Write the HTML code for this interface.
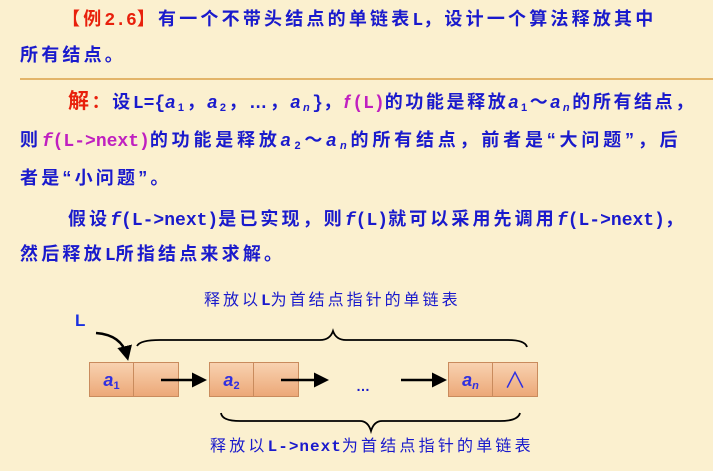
<!DOCTYPE html>
<html><head><meta charset="utf-8"><style>
body{margin:0;width:713px;height:471px;overflow:hidden;background:#fbf0cf;position:relative;font-family:"Liberation Sans","Noto Sans CJK SC",sans-serif;}
.t{position:absolute;left:0;white-space:nowrap;color:#1a1acc;font-size:18px;font-weight:bold;letter-spacing:3.2px;line-height:22px}
.r{color:#e8200c}.m{color:#c020c0}
.mo{font-family:"Liberation Mono",monospace;letter-spacing:0}
i{font-style:italic}
.b{position:absolute;height:35px;background:linear-gradient(#f8d2b0,#eca878);border:1px solid #c98b5d;box-sizing:border-box;color:#3030e0;font-size:18px;font-weight:bold;text-align:center;line-height:35px}
sub{font-size:11px;vertical-align:-3px}
</style></head><body>
<div style="position:absolute;left:20px;top:78px;width:693px;height:2px;background:#e3b56a"></div>
<div class="t" style="left:62px;top:8px"><span class="r">【例<span class="mo">2.6</span>】</span>有一个不带头结点的单链表<span class="mo">L</span>，设计一个算法释放其中</div>
<div class="t" style="left:20px;top:44px">所有结点。</div>
<div class="t" style="left:68px;top:91px;letter-spacing:2.6px"><span class="r" style="font-size:21px">解</span><span class="r">：</span>设<span class="mo">L={</span><i>a</i><sub>1</sub>，<i>a</i><sub>2</sub>，…，<i>a<sub>n</sub></i><span class="mo">}</span>，<span class="m"><i>f</i><span class="mo">(L)</span></span>的功能是释放<i>a</i><sub>1</sub>～<i>a<sub>n</sub></i>的所有结点，</div>
<div class="t" style="left:20px;top:129px;letter-spacing:3.8px">则<span class="m mo"><i>f</i>(L-&gt;next)</span>的功能是释放<i>a</i><sub>2</sub>～<i>a<sub>n</sub></i>的所有结点，前者是“大问题”，后</div>
<div class="t" style="left:20px;top:167px">者是“小问题”。</div>
<div class="t" style="left:68px;top:208px;letter-spacing:3.1px">假设<span class="mo"><i>f</i>(L-&gt;next)</span>是已实现，则<span class="mo"><i>f</i>(L)</span>就可以采用先调用<span class="mo"><i>f</i>(L-&gt;next)</span>，</div>
<div class="t" style="left:20px;top:243px">然后释放<span class="mo">L</span>所指结点来求解。</div>
<div class="t" style="left:204px;top:290px;font-size:16px;font-weight:normal;letter-spacing:3px">释放以<b class="mo">L</b>为首结点指针的单链表</div>
<div class="t" style="left:210px;top:436px;font-size:16px;font-weight:normal;letter-spacing:3.2px">释放以<b class="mo" style="letter-spacing:1px">L-&gt;next</b>为首结点指针的单链表</div>
<div class="t" style="left:75px;top:310px;font-size:17px;color:#1a30e0">L</div>
<div class="b" style="left:89px;top:362px;width:45px"><i>a</i><sub>1</sub></div>
<div class="b" style="left:133px;top:362px;width:46px"></div>
<div class="b" style="left:209px;top:362px;width:45px"><i>a</i><sub>2</sub></div>
<div class="b" style="left:253px;top:362px;width:46px"></div>
<div class="b" style="left:448px;top:362px;width:45px"><i>a<sub>n</sub></i></div>
<div class="b" style="left:492px;top:362px;width:46px;font-weight:normal;font-size:22px">∧</div>
<div class="t" style="left:356px;top:375px;font-size:14px">…</div>
<svg style="position:absolute;left:0;top:0" width="713" height="471">
<defs><marker id="a" markerWidth="6" markerHeight="6" refX="4" refY="3" orient="auto"><path d="M0,0L6,3L0,6z" fill="#000"/></marker></defs>
<g stroke="#000" stroke-width="2.5" fill="none">
<line x1="161" y1="380" x2="202" y2="380" marker-end="url(#a)"/>
<line x1="281" y1="380" x2="324" y2="380" marker-end="url(#a)"/>
<line x1="401" y1="380" x2="442" y2="380" marker-end="url(#a)"/>
<path d="M96,333 Q122,335 127,356" marker-end="url(#a)"/>
</g>
<g stroke="#000" stroke-width="1.8" fill="none">
<path d="M137,346 Q140,340 160,340 L320,340 Q330,340 333,331 Q336,340 346,340 L508,340 Q525,340 527,347"/>
<path d="M221,413 Q222,421 240,421 L360,421 Q368,421 371,431 Q374,421 382,421 L500,421 Q518,421 520,413"/>
</g>
</svg>
</body></html>
